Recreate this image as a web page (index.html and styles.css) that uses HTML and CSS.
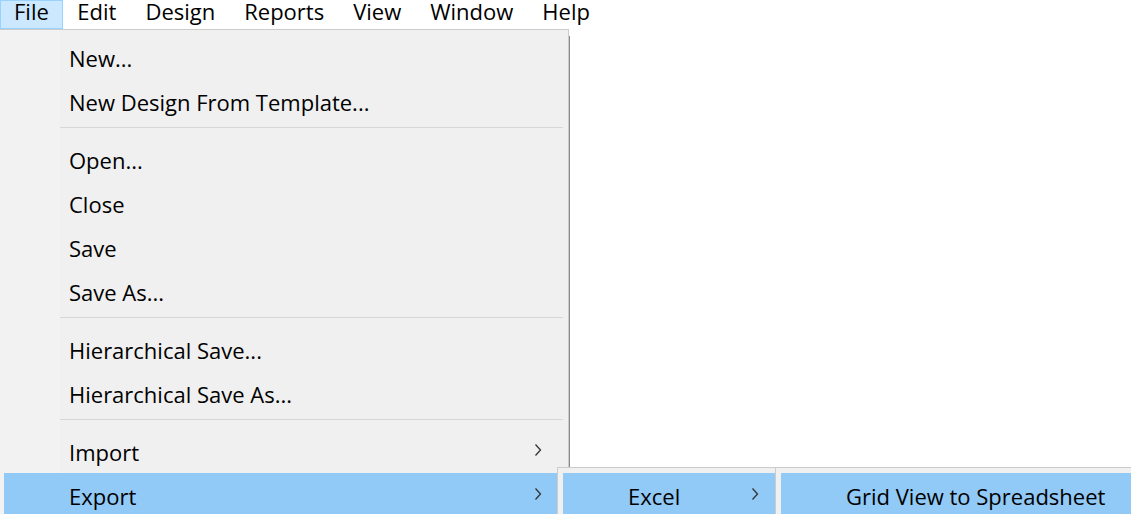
FILE: index.html
```html
<!DOCTYPE html>
<html>
<head>
<meta charset="utf-8">
<link rel="stylesheet" href="styles.css">
</head>
<body>
<div class="app">
  <nav class="menubar">
    <span class="mb-item active">File</span>
    <span class="mb-item">Edit</span>
    <span class="mb-item">Design</span>
    <span class="mb-item">Reports</span>
    <span class="mb-item">View</span>
    <span class="mb-item">Window</span>
    <span class="mb-item">Help</span>
  </nav>

  <div class="menu main-menu">
    <div class="gutter"></div>
    <div class="item">New...</div>
    <div class="item">New Design From Template...</div>
    <div class="sep"></div>
    <div class="item">Open...</div>
    <div class="item">Close</div>
    <div class="item">Save</div>
    <div class="item">Save As...</div>
    <div class="sep"></div>
    <div class="item">Hierarchical Save...</div>
    <div class="item">Hierarchical Save As...</div>
    <div class="sep"></div>
    <div class="item has-sub">Import<svg class="chev" viewBox="0 0 8 14" width="8" height="14"><path d="M1.5 1.5 L6.5 7 L1.5 12.5" fill="none" stroke="#333" stroke-width="1.3"/></svg></div>
    <div class="item has-sub hot">Export<svg class="chev" viewBox="0 0 8 14" width="8" height="14"><path d="M1.5 1.5 L6.5 7 L1.5 12.5" fill="none" stroke="#333" stroke-width="1.3"/></svg></div>
  </div>

  <div class="menu sub excel-menu">
    <div class="item has-sub hot">Excel<svg class="chev" viewBox="0 0 8 14" width="8" height="14"><path d="M1.5 1.5 L6.5 7 L1.5 12.5" fill="none" stroke="#333" stroke-width="1.3"/></svg></div>
  </div>

  <div class="menu sub grid-menu">
    <div class="item hot">Grid View to Spreadsheet</div>
  </div>
</div>
</body>
</html>
```

FILE: styles.css
```css
html, body {
  margin: 0;
  padding: 0;
  background: #ffffff;
}

body {
  width: 1131px;
  height: 514px;
  overflow: hidden;
  font-family: "Open Sans", "Noto Sans", sans-serif;
  color: #000;
}

.app {
  position: relative;
  width: 1131px;
  height: 514px;
}

.menubar {
  display: flex;
  height: 29px;
  align-items: stretch;
}

.mb-item {
  display: block;
  padding: 1px 13.5px 0 13.5px;
  font-size: 22px;
  line-height: 18px;
  border: 1px solid transparent;
  box-sizing: border-box;
  height: 29px;
}

.mb-item.active {
  padding: 1px 13px 0 13px;
  background: #cce8ff;
  border-color: #99d1ff;
}

.menu {
  position: absolute;
  background: #f0f0f0;
  border: 1px solid #cccccc;
  box-sizing: border-box;
}

.main-menu {
  left: 0;
  top: 29px;
  width: 569px;
  height: 500px;
  padding: 5px 5px 0 4px;
  border-left: none;
}

.main-menu::after {
  content: "";
  position: absolute;
  right: -2px;
  top: 6px;
  bottom: 0;
  width: 1px;
  background: #8a8a8a;
}

.gutter {
  position: absolute;
  left: 0;
  top: 0;
  bottom: 0;
  width: 60px;
  background: #f2f2f2;
}

.item {
  position: relative;
  display: flex;
  align-items: center;
  height: 44px;
  padding: 2px 0 0 65px;
  box-sizing: border-box;
  font-size: 22px;
  white-space: nowrap;
}

.item.hot {
  background: #91c9f7;
}

.chev {
  position: absolute;
  right: 21px;
  top: 14px;
}

.sep {
  position: relative;
  height: 14px;
  margin-left: 56px;
}

.sep::before {
  content: "";
  position: absolute;
  left: 0;
  right: 0;
  top: 4px;
  height: 1px;
  background: #d7d7d7;
}

.sub {
  top: 467px;
  height: 60px;
  padding: 5px 1px 0 5px;
}

.excel-menu {
  left: 557px;
  width: 220px;
}

.grid-menu {
  left: 775px;
  width: 370px;
}

.excel-menu .chev {
  right: 16px;
}
```
